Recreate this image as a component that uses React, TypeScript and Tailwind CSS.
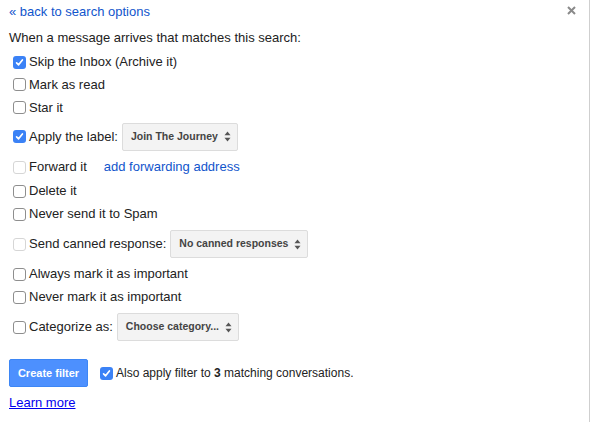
import type { ReactNode } from 'react'

function Box({ checked = false, disabled = false }: { checked?: boolean; disabled?: boolean }) {
  if (checked) {
    return (
      <span className="ml-[4px] mr-[3px] flex h-[13px] w-[13px] shrink-0 items-center justify-center rounded-[3px] bg-[#3b82f6]">
        <svg width="9" height="9" viewBox="0 0 9 9" fill="none">
          <path d="M1.6 4.8 L3.6 6.8 L7.4 2" stroke="white" strokeWidth="1.7" strokeLinecap="round" strokeLinejoin="round" />
        </svg>
      </span>
    )
  }
  return (
    <span
      className={`ml-[4px] mr-[3px] h-[13px] w-[13px] shrink-0 rounded-[3px] border bg-white ${
        disabled ? 'border-[#d6d6d6]' : 'border-[#8e8e8e]'
      }`}
    />
  )
}

function Select({ label }: { label: string }) {
  return (
    <span className="ml-[4px] flex h-[28px] items-center gap-[6px] rounded-[2px] border border-[#dcdcdc] bg-[#f3f3f3] pl-[8px] pr-[6px] text-[10.5px] font-bold text-[#444]">
      {label}
      <svg width="7" height="11" viewBox="0 0 7 11">
        <path d="M3.5 0.5 L6.5 4.2 H0.5 Z" fill="#555" />
        <path d="M3.5 10.5 L6.5 6.8 H0.5 Z" fill="#555" />
      </svg>
    </span>
  )
}

function Row({ h, children }: { h: string; children: ReactNode }) {
  return <div className={`flex items-center ${h}`}>{children}</div>
}

export default function App() {
  return (
    <div
      className="relative h-[422px] w-[590px] border-r border-[#cfcfcf] bg-white pl-[9px] text-[13px] text-[#222]"
      style={{ fontFamily: '"Liberation Sans", Arial, sans-serif' }}
    >
      <button className="absolute right-[12px] top-[5px] p-[1px]">
        <svg width="9" height="9" viewBox="0 0 9 9">
          <path d="M1 1 L8 8 M8 1 L1 8" stroke="#8a8a8a" strokeWidth="2" />
        </svg>
      </button>

      <Row h="h-[24px]">
        <a className="text-[#15c]">« back to search options</a>
      </Row>
      <Row h="h-[27px]">When a message arrives that matches this search:</Row>

      <Row h="h-[22px]">
        <Box checked />
        Skip the Inbox (Archive it)
      </Row>
      <Row h="h-[23px]">
        <Box />
        Mark as read
      </Row>
      <Row h="h-[23px]">
        <Box />
        Star it
      </Row>
      <Row h="h-[35px]">
        <Box checked />
        Apply the label:
        <Select label="Join The Journey" />
      </Row>
      <Row h="h-[26px]">
        <Box disabled />
        Forward it
        <a className="ml-[17px] text-[#15c]">add forwarding address</a>
      </Row>
      <Row h="h-[22px]">
        <Box />
        Delete it
      </Row>
      <Row h="h-[24px]">
        <Box />
        Never send it to Spam
      </Row>
      <Row h="h-[36px]">
        <Box disabled />
        Send canned response:
        <Select label="No canned responses" />
      </Row>
      <Row h="h-[24px]">
        <Box />
        Always mark it as important
      </Row>
      <Row h="h-[22px]">
        <Box />
        Never mark it as important
      </Row>
      <Row h="h-[38px]">
        <Box />
        Categorize as:
        <Select label="Choose category..." />
      </Row>

      <div className="mt-[13px] flex h-[28px] items-center">
        <button className="flex h-[28px] w-[79px] items-center justify-center rounded-[2px] border border-[#3d86f5] bg-[#4d90fe] text-[11px] font-bold text-white">
          Create filter
        </button>
        <span className="ml-[8px] flex items-center text-[12px]">
          <Box checked />
          Also apply filter to&nbsp;<b>3</b>&nbsp;matching conversations.
        </span>
      </div>
      <Row h="h-[32px]">
        <a className="text-[#0000ee] underline">Learn more</a>
      </Row>
    </div>
  )
}
